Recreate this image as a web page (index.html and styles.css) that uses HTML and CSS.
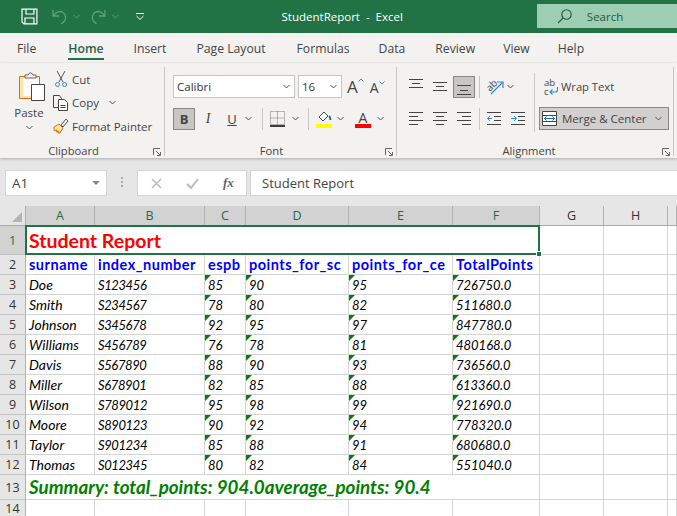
FILE: index.html
```html
<!DOCTYPE html>
<html lang="en">
<head>
    <meta charset="UTF-8">
    <meta name="viewport" content="width=device-width, initial-scale=1.0">
    <title>StudentReport - Excel</title>
    <link rel="stylesheet" href="styles.css">
</head>
<body>
    <header class="titlebar">
        <svg class="qa-save" width="17" height="17" viewBox="0 0 17 17" fill="none" stroke="#fff" stroke-width="1.2"><path d="M1 1h15v15H3l-2-2zM5 1v5h8V1M4 16v-6h9v6"/></svg>
        <svg class="qa-undo" width="15" height="17" viewBox="0 0 15 17" fill="none" stroke="#5f9f7f" stroke-width="1.3"><path d="M1 2v6h6M1.5 7.500C4 3.500 8 2.500 11 4.500c3 2 3.500 6 1.500 8.500l-3 3"/></svg>
        <svg class="qa-chev" width="7" height="5" viewBox="0 0 7 5" fill="none" stroke="#5f9f7f"><path d="M.5 1l3 3 3-3"/></svg>
        <svg class="qa-redo" width="15" height="17" viewBox="0 0 15 17" fill="none" stroke="#5f9f7f" stroke-width="1.3"><path d="M14 2v6H8M13.500 7.500C11 3.500 7 2.500 4 4.500c-3 2-3.500 6-1.500 8.500l3 3"/></svg>
        <svg class="qa-chev" width="7" height="5" viewBox="0 0 7 5" fill="none" stroke="#5f9f7f"><path d="M.5 1l3 3 3-3"/></svg>
        <svg class="qa-more" width="8" height="7" viewBox="0 0 8 7" fill="none" stroke="#fff"><path d="M0 .5h8M.5 3l3.500 3.500L7.500 3"/></svg>
        <div class="doc-title">StudentReport&nbsp; -&nbsp; Excel</div>
        <div class="search">
            <svg width="15" height="15" viewBox="0 0 15 15" fill="none" stroke="#1c5c3c" stroke-width="1.1"><circle cx="9.500" cy="5.500" r="4.700"/><path d="M6 9l-5 5"/></svg>
            <span>Search</span>
        </div>
    </header>

    <nav class="tabs">
        <span class="tab tab-file">File</span>
        <span class="tab tab-home active">Home</span>
        <span class="tab tab-insert">Insert</span>
        <span class="tab tab-layout">Page Layout</span>
        <span class="tab tab-formulas">Formulas</span>
        <span class="tab tab-data">Data</span>
        <span class="tab tab-review">Review</span>
        <span class="tab tab-view">View</span>
        <span class="tab tab-help">Help</span>
    </nav>

    <section class="ribbon">
        <div class="group group-clipboard">
            <div class="group-body clip-body">
                <div class="paste">
                    <svg class="paste-icon" width="28" height="29" viewBox="0 0 28 29">
                        <path d="M1.500 4.500h20v22h-20z" fill="#fce4a8" stroke="#d8700f"/>
                        <path d="M5 6h16v11H13v7H5z" fill="#fdfdfd"/>
                        <path d="M7 6V3h3l1.500-2h2L15 3h3v3z" fill="#f3f2f1" stroke="#666"/>
                        <path d="M13.500 12.500h13v16h-13z" fill="#fff" stroke="#444"/>
                    </svg>
                    <span class="paste-label">Paste</span>
                    <svg class="chev" width="7" height="5" viewBox="0 0 7 5"><path d="M.5 1l3 3 3-3"/></svg>
                </div>
                <div class="clip-list">
                    <div class="clip-item">
                        <svg width="12" height="17" viewBox="0 0 12 17" fill="none"><path d="M2 0l6 11M10 0L4 11" stroke="#555"/><circle cx="2.500" cy="13.500" r="2" stroke="#2b88d8"/><circle cx="9.500" cy="13.500" r="2" stroke="#2b88d8"/></svg>
                        <span>Cut</span>
                    </div>
                    <div class="clip-item">
                        <svg width="16" height="16" viewBox="0 0 16 16" fill="#f3f2f1" stroke="#444"><path d="M.5.500h6l2 3v9h-8z"/><path d="M5.500 4.500h6l3 3v8h-9z" fill="#fff"/><path d="M7.500 10.500h5M7.500 12.500h5"/></svg>
                        <span>Copy</span>
                        <svg class="chev chev-copy" width="7" height="5" viewBox="0 0 7 5"><path d="M.5 1l3 3 3-3"/></svg>
                    </div>
                    <div class="clip-item">
                        <svg width="16" height="16" viewBox="0 0 16 16" fill="none"><path d="M1 9l5-3 4 4-3 5H5l1-2-3 1 1-2-3 .5z" fill="#fce4a8" stroke="#d8700f"/><path d="M8 7l5-6 2 2-5 6z" fill="#f3f2f1" stroke="#555"/></svg>
                        <span>Format Painter</span>
                    </div>
                </div>
            </div>
            <div class="group-label label-clipboard">Clipboard<svg class="launcher" width="8" height="8" viewBox="0 0 8 8" fill="none" stroke="#666"><path d="M.5 7V.5H7M3 3l4 4M7.500 4v3.500H4"/></svg></div>
        </div>

        <div class="group group-font">
            <div class="group-body stack">
                <div class="row">
                    <div class="select font-name"><span>Calibri</span><svg class="chev" width="7" height="5" viewBox="0 0 7 5"><path d="M.5 1l3 3 3-3"/></svg></div>
                    <div class="select font-size"><span>16</span><svg class="chev" width="7" height="5" viewBox="0 0 7 5"><path d="M.5 1l3 3 3-3"/></svg></div>
                    <span class="grow-a">A<svg width="6" height="4" viewBox="0 0 6 4" fill="none" stroke="#2b88d8"><path d="M.5 3.500L3 1l2.500 2.500"/></svg></span>
                    <span class="shrink-a">A<svg width="6" height="4" viewBox="0 0 6 4" fill="none" stroke="#2b88d8"><path d="M.5.500L3 3 5.500.500"/></svg></span>
                </div>
                <div class="row">
                    <span class="tb pressed bold">B</span>
                    <span class="tb italic">I</span>
                    <span class="tb underline">U</span>
                    <svg class="chev" width="7" height="5" viewBox="0 0 7 5"><path d="M.5 1l3 3 3-3"/></svg>
                    <span class="vsep vsep-font"></span>
                    <svg class="border-icon" width="15" height="16" viewBox="0 0 15 16" fill="none" stroke="#777" stroke-dasharray="1 1"><path d="M.5.500h14v13H.500zM7.500.500v13M.500 7h14"/><path d="M0 15h15" stroke="#000" stroke-width="1.500" stroke-dasharray="none"/></svg>
                    <svg class="chev chev-border" width="7" height="5" viewBox="0 0 7 5"><path d="M.5 1l3 3 3-3"/></svg>
                    <span class="vsep vsep-border"></span>
                    <svg class="fill-icon" width="16" height="18" viewBox="0 0 16 18" fill="none"><path d="M3 7l5-5 4 4-5 5z" fill="#fff" stroke="#444"/><path d="M13 6c1 1 1.500 3 1.500 4" stroke="#1a6fb5" stroke-width="2"/><path d="M0 14h16v4H0z" fill="#ffff00" stroke="none"/></svg>
                    <svg class="chev chev-fill" width="7" height="5" viewBox="0 0 7 5"><path d="M.5 1l3 3 3-3"/></svg>
                    <span class="color-a">A</span>
                    <svg class="chev" width="7" height="5" viewBox="0 0 7 5"><path d="M.5 1l3 3 3-3"/></svg>
                </div>
            </div>
            <div class="group-label label-font">Font<svg class="launcher" width="8" height="8" viewBox="0 0 8 8" fill="none" stroke="#666"><path d="M.5 7V.5H7M3 3l4 4M7.500 4v3.500H4"/></svg></div>
        </div>

        <div class="group group-align">
            <div class="group-body align-body">
                <div class="stack align-left">
                    <div class="row">
                        <span class="tb"><svg width="14" height="22" viewBox="0 0 14 22" stroke="#444"><path d="M0 3.500h14M3 7.500h8M0 11.500h14"/></svg></span>
                        <span class="tb"><svg width="14" height="22" viewBox="0 0 14 22" stroke="#444"><path d="M0 6.500h14M3 10.500h8M0 14.500h14"/></svg></span>
                        <span class="tb pressed"><svg width="14" height="20" viewBox="0 0 14 20" stroke="#444"><path d="M0 8.500h14M3 13.500h8M0 17.500h14"/></svg></span>
                        <span class="vsep vsep-align"></span>
                        <svg class="orient" width="17" height="17" viewBox="0 0 17 17" fill="none"><text x="0" y="11" class="orient-text" transform="rotate(-45 5 9)">ab</text><path d="M4 16L15 5M10 4h6v6" stroke="#2b88d8" stroke-width="1.200"/></svg>
                        <svg class="chev chev-orient" width="7" height="5" viewBox="0 0 7 5"><path d="M.5 1l3 3 3-3"/></svg>
                    </div>
                    <div class="row">
                        <span class="tb"><svg width="14" height="13" viewBox="0 0 14 13" stroke="#444"><path d="M0 .5h14M0 4.500h9M0 8.500h14M0 12.500h9"/></svg></span>
                        <span class="tb"><svg width="14" height="13" viewBox="0 0 14 13" stroke="#444"><path d="M0 .5h14M3 4.500h8M0 8.500h14M3 12.500h8"/></svg></span>
                        <span class="tb"><svg width="14" height="13" viewBox="0 0 14 13" stroke="#444"><path d="M0 .5h14M5 4.500h9M0 8.500h14M5 12.500h9"/></svg></span>
                        <span class="vsep vsep-align"></span>
                        <svg class="indent" width="14" height="13" viewBox="0 0 14 13" fill="none" stroke="#444"><path d="M0 .5h14M7 4.500h7M7 8.500h7M0 12.500h14"/><path d="M5 6.500H.5M3 4L.5 6.500 3 9" stroke="#2b88d8"/></svg>
                        <svg class="indent" width="14" height="13" viewBox="0 0 14 13" fill="none" stroke="#444"><path d="M0 .5h14M7 4.500h7M7 8.500h7M0 12.500h14"/><path d="M0 6.500h5M3 4l2.500 2.500L3 9" stroke="#2b88d8"/></svg>
                    </div>
                </div>
                <span class="vsep vsep-wrap"></span>
                <div class="stack align-right">
                    <div class="wrap-btn">
                        <span class="wrap-icon"><span>ab</span><span class="wrap-c">c<svg width="9" height="9" viewBox="0 0 9 9" fill="none" stroke="#2b88d8" stroke-width="1.100"><path d="M8.500 0v3a2 2 0 0 1-2 2H1M3.500 2.500L1 5l2.500 2.500"/></svg></span></span>
                        <span class="wrap-label">Wrap Text</span>
                    </div>
                    <div class="merge-btn">
                        <svg width="15" height="15" viewBox="0 0 15 15" fill="#fff" stroke="#444"><path d="M.5.500h14v14H.500zM.500 4.500h14M.500 10.500h14"/><path d="M2 7.500h11M4.500 5.500L2.500 7.500l2 2M10.500 5.500l2 2-2 2" fill="none" stroke="#1a6fb5"/></svg>
                        <span>Merge &amp; Center</span>
                        <svg class="chev" width="7" height="5" viewBox="0 0 7 5"><path d="M.5 1l3 3 3-3"/></svg>
                    </div>
                </div>
            </div>
            <div class="group-label label-align">Alignment<svg class="launcher" width="8" height="8" viewBox="0 0 8 8" fill="none" stroke="#666"><path d="M.5 7V.5H7M3 3l4 4M7.500 4v3.500H4"/></svg></div>
        </div>
    </section>

    <section class="formula-bar">
        <div class="name-box"><span>A1</span><i class="name-arrow"></i></div>
        <div class="grip"></div>
        <div class="fx-box">
            <svg width="11" height="11" viewBox="0 0 11 11" fill="none" stroke="#bbb" stroke-width="1.500"><path d="M1 1l9 9M10 1l-9 9"/></svg>
            <svg width="13" height="11" viewBox="0 0 13 11" fill="none" stroke="#bbb" stroke-width="2"><path d="M1 6l4 4 7-9"/></svg>
            <span class="fx">fx</span>
        </div>
        <div class="formula-input">Student Report</div>
    </section>

    <div class="sheet">
        <table class="grid">
            <colgroup>
                <col class="c-head"><col class="c-a"><col class="c-b"><col class="c-c"><col class="c-d"><col class="c-e"><col class="c-f"><col class="c-g"><col class="c-h"><col class="c-i">
            </colgroup>
            <tr class="r-head">
                <th class="corner"><i></i></th>
                <th class="sel">A</th><th class="sel">B</th><th class="sel">C</th><th class="sel">D</th><th class="sel">E</th><th class="sel">F</th>
                <th>G</th><th>H</th><th></th>
            </tr>
            <tr class="r-title">
                <th class="sel">1</th>
                <td colspan="6" class="title"><span class="selection"></span>Student Report</td>
                <td></td><td></td><td></td>
            </tr>
            <tr class="r-columns">
                <th>2</th>
                <td class="col-name">surname</td><td class="col-name">index_number</td><td class="col-name">espb</td><td class="col-name">points_for_sc</td><td class="col-name">points_for_ce</td><td class="col-name">TotalPoints</td>
                <td></td><td></td><td></td>
            </tr>
            <tr><th>3</th><td class="val">Doe</td><td class="val sid">S123456</td><td class="val flag">85</td><td class="val flag">90</td><td class="val flag">95</td><td class="val flag">726750.0</td><td></td><td></td><td></td></tr>
            <tr><th>4</th><td class="val">Smith</td><td class="val sid">S234567</td><td class="val flag">78</td><td class="val flag">80</td><td class="val flag">82</td><td class="val flag">511680.0</td><td></td><td></td><td></td></tr>
            <tr><th>5</th><td class="val">Johnson</td><td class="val sid">S345678</td><td class="val flag">92</td><td class="val flag">95</td><td class="val flag">97</td><td class="val flag">847780.0</td><td></td><td></td><td></td></tr>
            <tr><th>6</th><td class="val">Williams</td><td class="val sid">S456789</td><td class="val flag">76</td><td class="val flag">78</td><td class="val flag">81</td><td class="val flag">480168.0</td><td></td><td></td><td></td></tr>
            <tr><th>7</th><td class="val">Davis</td><td class="val sid">S567890</td><td class="val flag">88</td><td class="val flag">90</td><td class="val flag">93</td><td class="val flag">736560.0</td><td></td><td></td><td></td></tr>
            <tr><th>8</th><td class="val">Miller</td><td class="val sid">S678901</td><td class="val flag">82</td><td class="val flag">85</td><td class="val flag">88</td><td class="val flag">613360.0</td><td></td><td></td><td></td></tr>
            <tr><th>9</th><td class="val">Wilson</td><td class="val sid">S789012</td><td class="val flag">95</td><td class="val flag">98</td><td class="val flag">99</td><td class="val flag">921690.0</td><td></td><td></td><td></td></tr>
            <tr><th>10</th><td class="val">Moore</td><td class="val sid">S890123</td><td class="val flag">90</td><td class="val flag">92</td><td class="val flag">94</td><td class="val flag">778320.0</td><td></td><td></td><td></td></tr>
            <tr><th>11</th><td class="val">Taylor</td><td class="val sid">S901234</td><td class="val flag">85</td><td class="val flag">88</td><td class="val flag">91</td><td class="val flag">680680.0</td><td></td><td></td><td></td></tr>
            <tr><th>12</th><td class="val">Thomas</td><td class="val sid">S012345</td><td class="val flag">80</td><td class="val flag">82</td><td class="val flag">84</td><td class="val flag">551040.0</td><td></td><td></td><td></td></tr>
            <tr class="r-summary">
                <th>13</th>
                <td colspan="6" class="summary">Summary: total_points: 904.0average_points: 90.4</td>
                <td></td><td></td><td></td>
            </tr>
            <tr class="r-last"><th>14</th><td></td><td></td><td></td><td></td><td></td><td></td><td></td><td></td><td></td></tr>
        </table>
    </div>
</body>
</html>
```

FILE: styles.css
```css
* {
    box-sizing: border-box;
}
html, body {
    margin: 0;
    width: 677px;
    height: 516px;
    overflow: hidden;
}
body {
    font-family: "Open Sans", "Noto Sans", sans-serif;
    font-size: 11.500px;
    color: #444;
    background: #e6e6e6;
}

/* title bar */
.titlebar {
    height: 33px;
    background: #217346;
    display: flex;
    align-items: center;
    color: #fff;
}
.qa-save { margin-left: 21px; }
.qa-undo { margin-left: 14px; }
.qa-redo { margin-left: 11px; }
.qa-chev { margin-left: 6px; }
.qa-more { margin-left: 17px; }
.doc-title {
    margin-left: 138px;
    width: 257px;
    font-size: 11.500px;
}
.search {
    width: 141px;
    height: 24px;
    align-self: flex-start;
    margin-top: 4px;
    background: #9fcdb3;
    color: #1c5c3c;
    display: flex;
    align-items: center;
    padding-left: 20px;
    gap: 15px;
}

/* tabs */
.tabs {
    height: 30px;
    background: #f3f2f1;
    display: flex;
    font-size: 12.200px;
    padding-top: 1px;
}
.tab {
    height: 29px;
    line-height: 29px;
}
.tab-file { margin-left: 17px; }
.tab-home { margin-left: 32px; }
.tab-insert { margin-left: 30px; }
.tab-layout { margin-left: 30px; }
.tab-formulas { margin-left: 31px; }
.tab-data { margin-left: 29px; }
.tab-review { margin-left: 30px; }
.tab-view { margin-left: 28px; }
.tab-help { margin-left: 28px; }
.active {
    font-weight: 600;
    color: #2f5f48;
    border-bottom: 2px solid #217346;
    height: 26px;
}

/* ribbon */
.ribbon {
    height: 95px;
    background: #f3f2f1;
    display: flex;
    box-shadow: 0 1px 3px rgba(0, 0, 0, 0.25);
    position: relative;
}
.group {
    display: flex;
    flex-direction: column;
    margin-top: 4px;
    height: 89px;
    border-right: 1px solid #c8c6c4;
}
.group-clipboard { width: 165px; }
.group-font { width: 232px; }
.group-align { width: 277px; }
.group-body {
    flex: 1;
    min-height: 0;
}
.group-label {
    height: 18px;
    padding-top: 8px;
    line-height: 10px;
    text-align: center;
    font-size: 11.200px;
    position: relative;
}
.label-clipboard { padding-right: 17px; }
.label-font { padding-right: 18px; }
.label-align { padding-right: 12px; }
.launcher {
    position: absolute;
    right: 3px;
    top: 10px;
}
.chev {
    fill: none;
    stroke: #555;
    flex: none;
}
.stack {
    display: flex;
    flex-direction: column;
    gap: 9px;
    padding-top: 8px;
}
.row {
    display: flex;
    align-items: center;
    height: 23px;
}

/* clipboard */
.clip-body {
    display: flex;
}
.paste {
    width: 50px;
    display: flex;
    flex-direction: column;
    align-items: center;
    padding: 5px 0 0 8px;
}
.paste-icon {
    margin-left: 5px;
}
.paste-label {
    margin-top: 4px;
}
.paste .chev {
    margin-top: 5px;
}
.clip-list {
    display: flex;
    flex-direction: column;
    padding-top: 1px;
}
.clip-item {
    height: 24px;
    display: flex;
    align-items: center;
    margin-left: 3px;
    white-space: nowrap;
}
.clip-item svg:first-child {
    width: 16px;
    margin-right: 3px;
}
.chev-copy {
    margin-left: 10px;
}

/* font group */
.group-font .stack {
    padding-left: 8px;
}
.select {
    height: 23px;
    background: #fff;
    border: 1px solid #c8c6c4;
    display: flex;
    align-items: center;
    justify-content: space-between;
    padding: 0 4px 0 3px;
    color: #333;
}
.font-name { width: 122px; }
.font-size { width: 44px; margin-left: 3px; }
.grow-a, .shrink-a {
    display: flex;
    align-items: flex-start;
    line-height: 1;
}
.grow-a {
    font-size: 17px;
    margin-left: 5px;
}
.shrink-a {
    font-size: 14px;
    margin-left: 6px;
    padding-top: 2px;
}
.tb {
    width: 22px;
    height: 22px;
    flex: none;
    display: flex;
    align-items: center;
    justify-content: center;
    margin-right: 2px;
    font-size: 13px;
}
.pressed {
    background: #c8c6c4;
    border: 1px solid #8a8886;
}
.bold { font-weight: 700; }
.italic {
    font-style: italic;
    font-family: "Liberation Serif", serif;
    font-size: 14px;
}
.underline { text-decoration: underline; }
.vsep {
    width: 1px;
    height: 22px;
    background: #c8c6c4;
    flex: none;
}
.vsep-font { margin: 0 7px 0 10px; }
.border-icon { flex: none; }
.chev-border { margin-left: 7px; }
.vsep-border { margin: 0 7px 0 9px; }
.fill-icon { flex: none; }
.chev-fill { margin-left: 5px; }
.color-a {
    width: 16px;
    margin: 0 6px 0 11px;
    text-align: center;
    font-size: 14px;
    line-height: 15px;
    height: 18px;
    border-bottom: 4px solid #ff0000;
    color: #444;
}

/* alignment group */
.align-body {
    display: flex;
}
.align-left {
    padding-left: 8px;
    width: 137px;
}
.vsep-align { margin: 0 7px 0 2px; }
.orient {
    flex: none;
    overflow: visible;
}
.orient-text {
    font-size: 10px;
    fill: #444;
    stroke: none;
}
.chev-orient { margin-left: 3px; }
.indent { margin-right: 10px; flex: none; }
.vsep-wrap {
    height: 59px;
    margin-top: 6px;
}
.align-right {
    padding-left: 4px;
}
.wrap-btn {
    height: 23px;
    display: flex;
    align-items: center;
    padding-left: 5px;
    gap: 2px;
    white-space: nowrap;
}
.wrap-icon {
    width: 15px;
    font-size: 9.500px;
    line-height: 9px;
    display: flex;
    flex-direction: column;
}
.wrap-c {
    display: flex;
    align-items: flex-end;
}
.wrap-label {
    font-size: 11.200px;
}
.merge-btn {
    width: 130px;
    height: 23px;
    background: #d2d0ce;
    border: 1px solid #8a8886;
    display: flex;
    align-items: center;
    padding: 0 6px 0 2px;
    gap: 5px;
    white-space: nowrap;
}
.merge-btn .chev {
    margin-left: auto;
}

/* formula bar */
.formula-bar {
    height: 48px;
    padding: 12px 0 10px 5px;
    display: flex;
    align-items: stretch;
}
.name-box {
    width: 102px;
    background: #fff;
    border: 1px solid #d4d4d4;
    display: flex;
    align-items: center;
    justify-content: space-between;
    padding: 0 6px;
    font-size: 13.500px;
}
.name-arrow {
    border: 4px solid transparent;
    border-top-color: #888;
    margin-top: 4px;
}
.grip {
    width: 2px;
    margin: 7px 14px;
    background: repeating-linear-gradient(#aaa 0 2px, transparent 2px 4px);
}
.fx-box {
    width: 110px;
    background: #fff;
    border: 1px solid #d4d4d4;
    display: flex;
    align-items: center;
    padding-left: 13px;
    gap: 24px;
}
.fx {
    font-family: "Liberation Serif", serif;
    font-style: italic;
    font-weight: 700;
    font-size: 13px;
    color: #666;
}
.formula-input {
    flex: 1;
    margin-left: 3px;
    background: #fff;
    border: 1px solid #d4d4d4;
    border-right: 0;
    padding-left: 11px;
    line-height: 24px;
    font-size: 13px;
}

/* sheet */
.sheet {
    height: 310px;
    background: #fff;
    overflow: hidden;
}
.grid {
    table-layout: fixed;
    border-collapse: separate;
    border-spacing: 0;
    width: 677px;
    font-family: Lato, "Liberation Sans", sans-serif;
}
.c-head { width: 26px; }
.c-a { width: 69px; }
.c-b { width: 110px; }
.c-c { width: 41px; }
.c-d { width: 103px; }
.c-e { width: 104px; }
.c-f { width: 87px; }
.c-g { width: 64px; }
.c-h { width: 64px; }
.c-i { width: 9px; }
.grid tr { height: 20px; }
.grid .r-head { height: 20px; }
.grid .r-title { height: 29px; }
.grid .r-columns { height: 20px; }
.grid .r-summary { height: 25px; }
.grid .r-last { height: 16px; }
th {
    background: #e6e6e6;
    border-right: 1px solid #b0b0b0;
    border-bottom: 1px solid #c4c4c4;
    font-family: "Open Sans", "Noto Sans", sans-serif;
    font-weight: 400;
    font-size: 12.500px;
    color: #333;
    padding: 0;
    overflow: hidden;
}
th.sel {
    background: #d2d2d2;
    color: #1f6b45;
}
.r-head th {
    border-bottom: 1px solid #a8a8a8;
}
.corner {
    position: relative;
}
.corner i {
    position: absolute;
    right: 3px;
    bottom: 3px;
    border: 5.500px solid #b4b4b4;
    border-top-color: transparent;
    border-left-color: transparent;
}
td {
    border-right: 1px solid #d4d4d4;
    border-bottom: 1px solid #d4d4d4;
    padding: 0 0 0 3px;
    vertical-align: bottom;
    white-space: nowrap;
    overflow: hidden;
    font-size: 13.500px;
    color: #000;
    line-height: 18px;
}
.title {
    position: relative;
    overflow: visible;
    color: #ff0000;
    font-weight: 700;
    font-size: 19.500px;
    line-height: 27px;
}
.selection {
    position: absolute;
    left: -1px;
    top: -1px;
    right: -1px;
    bottom: -1px;
    border: 2px solid #217346;
}
.selection::after {
    content: "";
    position: absolute;
    right: -4px;
    bottom: -4px;
    background: #217346;
    border: 1px solid #fff;
    box-sizing: content-box;
    width: 4px;
    height: 4px;
}
.col-name {
    color: #0000ff;
    font-weight: 700;
    font-size: 14.500px;
    letter-spacing: 0.5px;
}
.val {
    font-style: italic;
    font-size: 14px;
}
.sid {
    font-size: 13px;
    letter-spacing: -0.4px;
}
.flag {
    position: relative;
    font-size: 13px;
}
.flag::before {
    content: "";
    position: absolute;
    left: 0;
    top: 0;
    border-top: 6px solid #0b7a0b;
    border-right: 6px solid transparent;
}
.summary {
    color: #008000;
    font-weight: 700;
    font-style: italic;
    font-size: 18.800px;
    line-height: 24px;
}
```
